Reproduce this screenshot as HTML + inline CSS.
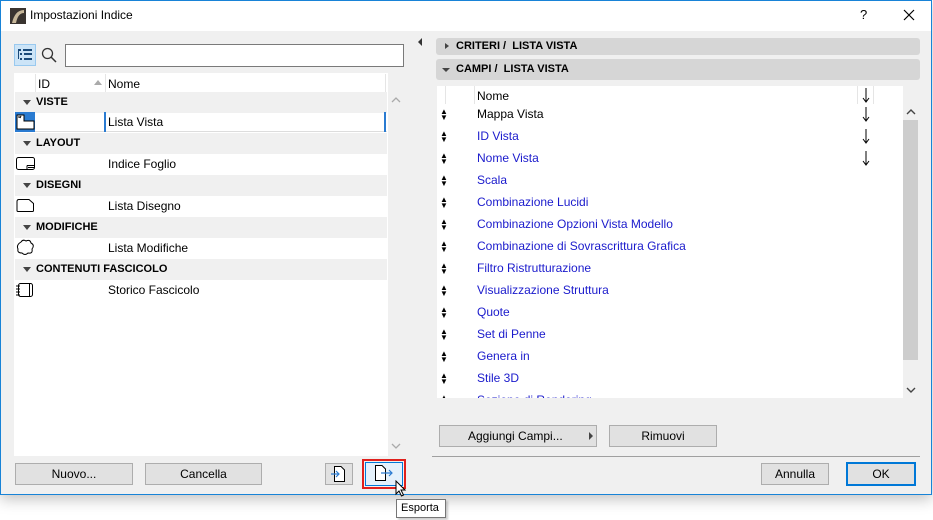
<!DOCTYPE html>
<html><head><meta charset="utf-8"><style>
*{margin:0;padding:0;box-sizing:border-box}
body{width:933px;height:520px;background:#fff;font-family:"Liberation Sans",sans-serif;font-size:12px;color:#000;position:relative;overflow:hidden}
.a{position:absolute}
.win{left:0;top:0;width:932px;height:495px;border:1px solid #1883d7;background:#f0f0f0;box-shadow:0 4px 14px rgba(0,0,0,.25)}
.title{left:1px;top:1px;width:930px;height:30px;background:#fff}
.btn{position:absolute;background:#e1e1e1;border:1px solid #adadad;text-align:center;line-height:20px;font-size:12px}
.grp{position:absolute;left:15px;width:372px;height:21px;background:#f0f0f0;font-weight:bold;font-size:11px;line-height:21px;padding-left:21px}
.grp:before{content:"";position:absolute;left:8px;top:8px;border-left:4px solid transparent;border-right:4px solid transparent;border-top:5px solid #444}
.it{position:absolute;left:108px;line-height:21px}
.r{position:absolute;left:477px;color:#1a1acc;line-height:22px}
.ud{position:absolute;left:440px;font-size:8px;line-height:6px;color:#000}
.dn{position:absolute;left:862px}
</style></head><body>
<svg width="0" height="0" style="position:absolute"><defs><symbol id="da" viewBox="0 0 8 16"><path d="M4 1V14M1 11L4 15L7 11" stroke="#000" fill="none" stroke-width="1"/></symbol></defs></svg>
<div class="a win"></div>
<div class="a title"></div>
<svg class="a" style="left:10px;top:8px" width="16" height="16"><rect width="16" height="16" fill="#3a3430"/><path d="M2 15 Q5 2 14 2 L14 5 Q8 5 6 15Z" fill="#c8b89a"/></svg>
<div class="a" style="left:30px;top:8px;font-size:12px">Impostazioni Indice</div>
<div class="a" style="left:860px;top:7px;font-size:13px">?</div>
<svg class="a" style="left:903px;top:9px" width="12" height="12"><path d="M1 1L11 11M11 1L1 11" stroke="#000" stroke-width="1.2"/></svg>

<div class="a" style="left:14px;top:44px;width:22px;height:22px;background:#cce4f7;border:1px solid #99c9ef"></div>
<svg class="a" style="left:17px;top:48px" width="16" height="14"><g fill="#1a4a7a"><rect x="1" y="1" width="3" height="2"/><rect x="6" y="1" width="9" height="2"/><rect x="3" y="5" width="2" height="2"/><rect x="7" y="5" width="8" height="2"/><rect x="3" y="10" width="2" height="2"/><rect x="7" y="10" width="8" height="2"/><rect x="1" y="3" width="1" height="8"/></g></svg>
<svg class="a" style="left:41px;top:47px" width="16" height="16"><circle cx="6.5" cy="6.5" r="5" fill="none" stroke="#333" stroke-width="1.3"/><path d="M10 10L15 15" stroke="#333" stroke-width="1.5"/></svg>
<div class="a" style="left:65px;top:44px;width:339px;height:23px;background:#fff;border:1px solid #7a7a7a"></div>

<div class="a" style="left:14px;top:73px;width:374px;height:383px;background:#fff"></div>
<div class="a" style="left:388px;top:92px;width:17px;height:364px;background:#f0f0f0"></div>
<svg class="a" style="left:391px;top:97px" width="10" height="6"><path d="M1 5L5 1L9 5" stroke="#aaa" fill="none" stroke-width="1.3"/></svg>
<svg class="a" style="left:391px;top:443px" width="10" height="6"><path d="M1 1L5 5L9 1" stroke="#aaa" fill="none" stroke-width="1.3"/></svg>
<div class="a" style="left:35px;top:74px;width:1px;height:18px;background:#e5e5e5"></div>
<div class="a" style="left:105px;top:74px;width:1px;height:18px;background:#e5e5e5"></div>
<div class="a" style="left:385px;top:74px;width:1px;height:18px;background:#e5e5e5"></div>
<div class="a" style="left:38px;top:77px">ID</div>
<div class="a" style="left:94px;top:80px;border-left:4px solid transparent;border-right:4px solid transparent;border-bottom:5px solid #aaa"></div>
<div class="a" style="left:108px;top:77px">Nome</div>

<div class="grp" style="top:92px">VISTE</div>
<div class="a" style="left:15px;top:112px;width:372px;height:20px;border-bottom:1px solid #ddd"></div>
<div class="a" style="left:15px;top:112px;width:20px;height:20px;background:#2a7bd1"></div>
<svg class="a" style="left:16px;top:114px" width="19" height="16"><path d="M1 1H8V7H18V15H1Z" fill="#fff" stroke="#000"/><path d="M3 2V4M5 2L4 4" stroke="#000"/></svg>
<div class="a" style="left:104px;top:112px;width:2px;height:20px;background:#2a7bd1"></div>
<div class="a" style="left:384px;top:112px;width:2px;height:20px;background:#2a7bd1"></div>
<div class="it" style="top:112px">Lista Vista</div>

<div class="grp" style="top:133px">LAYOUT</div>
<svg class="a" style="left:16px;top:157px" width="20" height="14"><rect x="0.5" y="0.5" width="18" height="12" rx="2" fill="none" stroke="#000"/><path d="M11 8.5H18.5M11 8.5V12.5M12 10.5H18" stroke="#000"/></svg>
<div class="it" style="top:154px">Indice Foglio</div>
<div class="grp" style="top:175px">DISEGNI</div>
<svg class="a" style="left:16px;top:199px" width="20" height="14"><path d="M1 2.5Q1 .5 3 .5H13L17.5 4.5V11.5Q17.5 12.5 16.5 12.5H2Q1 12.5 1 11.5Z" fill="none" stroke="#000"/></svg>
<div class="it" style="top:196px">Lista Disegno</div>
<div class="grp" style="top:217px">MODIFICHE</div>
<svg class="a" style="left:16px;top:239px" width="20" height="18"><path d="M5 3Q7 0 10 2Q14 0 15 4Q19 6 16 10Q17 15 12 14Q9 17 6 14Q1 14 2 10Q0 6 5 3Z" fill="none" stroke="#000"/></svg>
<div class="it" style="top:238px">Lista Modifiche</div>
<div class="grp" style="top:259px">CONTENUTI FASCICOLO</div>
<svg class="a" style="left:16px;top:283px" width="20" height="15"><rect x="2.5" y="0.5" width="14" height="13" rx="2" fill="none" stroke="#000"/><path d="M0 3H4M0 6H4M0 9H4M0 12H4M13.5 1V13" stroke="#000"/></svg>
<div class="it" style="top:280px">Storico Fascicolo</div>

<div class="btn" style="left:15px;top:463px;width:118px;height:22px">Nuovo...</div>
<div class="btn" style="left:145px;top:463px;width:117px;height:22px">Cancella</div>
<div class="btn" style="left:325px;top:463px;width:28px;height:22px"></div>
<svg class="a" style="left:331px;top:466px" width="16" height="17"><path d="M3.5 .5H10L13.5 4V15.5H3.5Z" fill="#fff" stroke="#000"/><path d="M0 8H8M5 5L8 8L5 11" stroke="#2a7bd1" fill="none" stroke-width="1.2"/></svg>
<div class="a" style="left:362px;top:459px;width:44px;height:30px;border:2px solid #e0201c"></div>
<div class="a" style="left:365px;top:462px;width:38px;height:24px;background:#e5f1fb;border:1px solid #0078d7"></div>
<svg class="a" style="left:375px;top:465px" width="20" height="17"><path d="M.5 .5H7L10.5 4V15.5H.5Z" fill="#fff" stroke="#000"/><path d="M6 8H17M14 5L17 8L14 11" stroke="#2a7bd1" fill="none" stroke-width="1.2"/></svg>
<svg class="a" style="left:395px;top:480px" width="12" height="18"><path d="M1 1V14L4 11L6.5 16L8.5 15L6 10H10Z" fill="#fff" stroke="#000"/></svg>
<div class="a" style="left:396px;top:499px;width:50px;height:19px;background:#fff;border:1px solid #767676;box-shadow:2px 2px 2px rgba(0,0,0,.2);font-size:11px;line-height:17px;padding-left:4px">Esporta</div>

<div class="a" style="left:418px;top:38px;border-top:4px solid transparent;border-bottom:4px solid transparent;border-right:4px solid #333"></div>

<div class="a" style="left:436px;top:38px;width:484px;height:17px;background:#d6d6d6;border-radius:3px"></div>
<div class="a" style="left:445px;top:43px;border-top:3px solid transparent;border-bottom:3px solid transparent;border-left:4px solid #444"></div>
<div class="a" style="left:456px;top:40px;font-weight:bold;font-size:11px">CRITERI /&nbsp; LISTA VISTA</div>
<div class="a" style="left:436px;top:59px;width:484px;height:21px;background:#d6d6d6;border-radius:3px"></div>
<div class="a" style="left:442px;top:68px;border-left:4px solid transparent;border-right:4px solid transparent;border-top:4px solid #444"></div>
<div class="a" style="left:456px;top:63px;font-weight:bold;font-size:11px">CAMPI /&nbsp; LISTA VISTA</div>

<div class="a" style="left:437px;top:86px;width:466px;height:312px;background:#fff"></div>
<div class="a" style="left:903px;top:104px;width:16px;height:294px;background:#f0f0f0"></div>
<div class="a" style="left:903px;top:120px;width:15px;height:240px;background:#cdcdcd"></div>
<svg class="a" style="left:906px;top:109px" width="10" height="6"><path d="M1 5L5 1L9 5" stroke="#444" fill="none" stroke-width="1.4"/></svg>
<svg class="a" style="left:906px;top:387px" width="10" height="6"><path d="M1 1L5 5L9 1" stroke="#444" fill="none" stroke-width="1.4"/></svg>
<div class="a" style="left:903px;top:86px;width:17px;height:18px;background:#f0f0f0"></div>
<div class="a" style="left:445px;top:86px;width:1px;height:18px;background:#e5e5e5"></div>
<div class="a" style="left:474px;top:86px;width:1px;height:18px;background:#e5e5e5"></div>
<div class="a" style="left:857px;top:86px;width:1px;height:18px;background:#e5e5e5"></div>
<div class="a" style="left:873px;top:86px;width:1px;height:18px;background:#e5e5e5"></div>
<div class="a" style="left:477px;top:89px">Nome</div>
<svg class="dn a" style="top:87px" width="8" height="16"><use href="#da"/></svg>

<div style="position:absolute;left:0;top:0;width:933px;height:398px;overflow:hidden">
<div class="ud" style="top:109px">&#9650;<br>&#9660;</div><div class="r" style="top:103px;color:#000">Mappa Vista</div><svg class="dn a" style="top:106px" width="8" height="16"><use href="#da"/></svg>
<div class="ud" style="top:131px">&#9650;<br>&#9660;</div><div class="r" style="top:125px">ID Vista</div><svg class="dn a" style="top:128px" width="8" height="16"><use href="#da"/></svg>
<div class="ud" style="top:153px">&#9650;<br>&#9660;</div><div class="r" style="top:147px">Nome Vista</div><svg class="dn a" style="top:150px" width="8" height="16"><use href="#da"/></svg>
<div class="ud" style="top:175px">&#9650;<br>&#9660;</div><div class="r" style="top:169px">Scala</div>
<div class="ud" style="top:197px">&#9650;<br>&#9660;</div><div class="r" style="top:191px">Combinazione Lucidi</div>
<div class="ud" style="top:219px">&#9650;<br>&#9660;</div><div class="r" style="top:213px">Combinazione Opzioni Vista Modello</div>
<div class="ud" style="top:241px">&#9650;<br>&#9660;</div><div class="r" style="top:235px">Combinazione di Sovrascrittura Grafica</div>
<div class="ud" style="top:263px">&#9650;<br>&#9660;</div><div class="r" style="top:257px">Filtro Ristrutturazione</div>
<div class="ud" style="top:285px">&#9650;<br>&#9660;</div><div class="r" style="top:279px">Visualizzazione Struttura</div>
<div class="ud" style="top:307px">&#9650;<br>&#9660;</div><div class="r" style="top:301px">Quote</div>
<div class="ud" style="top:329px">&#9650;<br>&#9660;</div><div class="r" style="top:323px">Set di Penne</div>
<div class="ud" style="top:351px">&#9650;<br>&#9660;</div><div class="r" style="top:345px">Genera in</div>
<div class="ud" style="top:373px">&#9650;<br>&#9660;</div><div class="r" style="top:367px">Stile 3D</div>
<div class="ud" style="top:395px">&#9650;<br>&#9660;</div><div class="r" style="top:389px">Sezione di Rendering</div>
</div>

<div class="btn" style="left:439px;top:425px;width:158px;height:22px;text-align:left;padding-left:28px">Aggiungi Campi...</div>
<div class="a" style="left:589px;top:432px;border-top:4px solid transparent;border-bottom:4px solid transparent;border-left:4px solid #444"></div>
<div class="btn" style="left:609px;top:425px;width:108px;height:22px">Rimuovi</div>
<div class="a" style="left:432px;top:456px;width:488px;height:1px;background:#a0a0a0"></div>
<div class="btn" style="left:761px;top:463px;width:68px;height:22px">Annulla</div>
<div class="btn" style="left:846px;top:462px;width:70px;height:24px;border:2px solid #0078d7;line-height:20px">OK</div>
</body></html>
